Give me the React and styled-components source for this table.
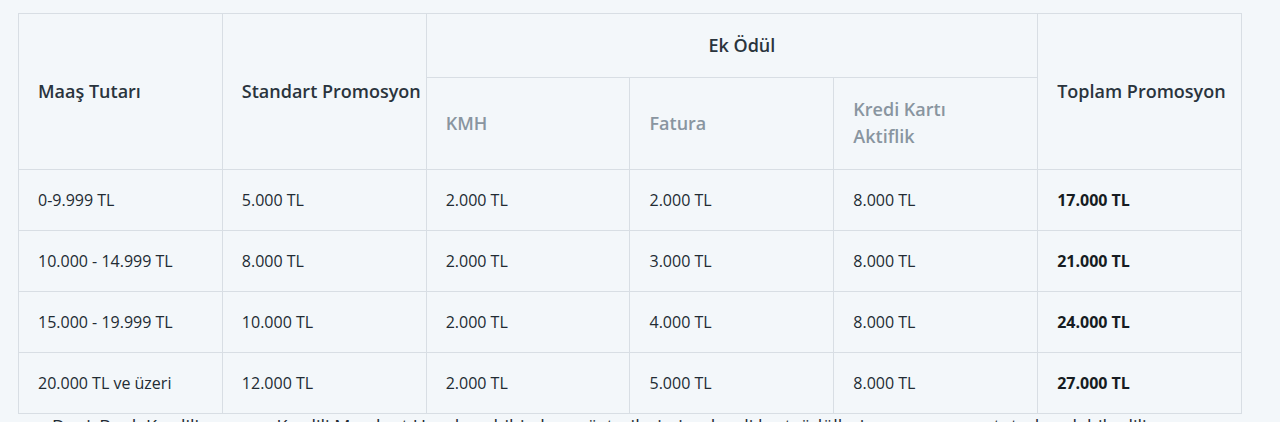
import React from "react"
import styled, { createGlobalStyle } from "styled-components"

const GlobalStyle = createGlobalStyle`
  html, body {
    margin: 0;
    padding: 0;
    background: #f3f7fa;
    font-family: "Open Sans", "Noto Sans", sans-serif;
    color: #222b33;
  }
`

const Page = styled.div`
  padding: 13px 0 0 18px;
  height: 422px;
  box-sizing: border-box;
  overflow: hidden;
`

const Table = styled.table`
  width: 1224px;
  border-collapse: collapse;
  table-layout: fixed;
  border: 1px solid #d8dee4;
  background: #f3f7fa;
`

const HeadCell = styled.th`
  border: 1px solid #d8dee4;
  padding: 18px 19px;
  padding-left: ${(p) => (p.$center ? "39px" : "19px")};
  padding-bottom: ${(p) => (p.$sub ? "19px" : "18px")};
  font-size: 18px;
  font-weight: 600;
  line-height: 27px;
  color: ${(p) => (p.$sub ? "#8995a0" : "#2a343d")};
  text-align: ${(p) => (p.$center ? "center" : "left")};
  vertical-align: middle;
  white-space: nowrap;
`

const Cell = styled.td`
  border: 1px solid #d8dee4;
  padding: 18px 19px;
  font-size: 16px;
  line-height: 24px;
  font-weight: ${(p) => (p.$bold ? 700 : 400)};
  color: ${(p) => (p.$bold ? "#161c22" : "#222b33")};
  vertical-align: middle;
`

const Note = styled.p`
  margin: 0;
  padding-left: 34px;
  font-size: 18px;
  line-height: 24px;
  color: #222b33;
  white-space: nowrap;
`

const rows = [
  ["0-9.999 TL", "5.000 TL", "2.000 TL", "2.000 TL", "8.000 TL", "17.000 TL"],
  ["10.000 - 14.999 TL", "8.000 TL", "2.000 TL", "3.000 TL", "8.000 TL", "21.000 TL"],
  ["15.000 - 19.999 TL", "10.000 TL", "2.000 TL", "4.000 TL", "8.000 TL", "24.000 TL"],
  ["20.000 TL ve üzeri", "12.000 TL", "2.000 TL", "5.000 TL", "8.000 TL", "27.000 TL"],
]

const App = () => {
  return (
    <Page>
      <GlobalStyle />
      <Table>
        <thead>
          <tr>
            <HeadCell rowSpan={2}>Maaş Tutarı</HeadCell>
            <HeadCell rowSpan={2}>Standart Promosyon</HeadCell>
            <HeadCell colSpan={3} $center>Ek Ödül</HeadCell>
            <HeadCell rowSpan={2}>Toplam Promosyon</HeadCell>
          </tr>
          <tr>
            <HeadCell $sub>KMH</HeadCell>
            <HeadCell $sub>Fatura</HeadCell>
            <HeadCell $sub>
              Kredi Kartı
              <br />
              Aktiflik
            </HeadCell>
          </tr>
        </thead>
        <tbody>
          {rows.map((row) => (
            <tr key={row[0]}>
              {row.map((value, i) => (
                <Cell key={i} $bold={i === 5}>
                  {value}
                </Cell>
              ))}
            </tr>
          ))}
        </tbody>
      </Table>
      <Note>
        DenizBank Kredili ve en az Kredili Mevduat Hesabı sahibi olan müşterilerimize, kredi kartı ödülleri ve promosyon tutarları dahil edilir.
      </Note>
    </Page>
  )
}

export default App
